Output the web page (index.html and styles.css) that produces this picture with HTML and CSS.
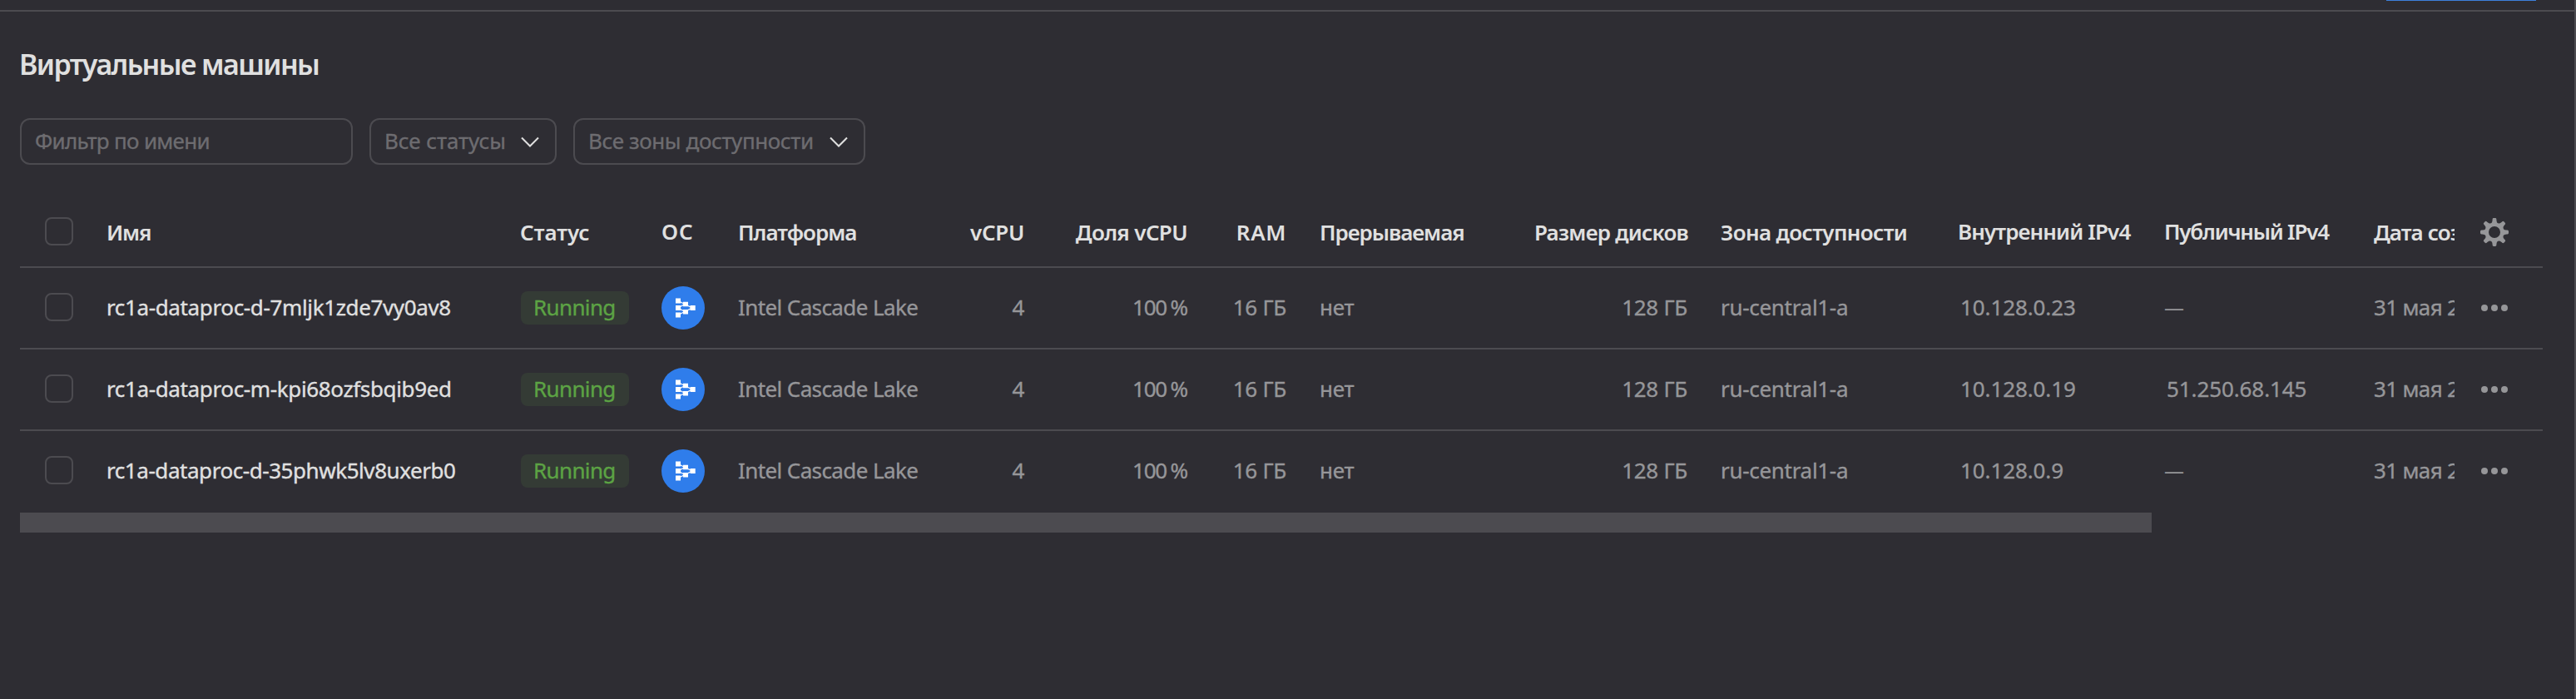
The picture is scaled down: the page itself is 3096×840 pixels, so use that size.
FILE: index.html
```html
<!DOCTYPE html>
<html lang="ru">
<head>
<meta charset="utf-8">
<title>Виртуальные машины</title>
<link rel="stylesheet" href="styles.css">
</head>
<body>
<svg class="defs" width="0" height="0">
  <symbol id="chevron" viewBox="0 0 22 14"><path d="M1 1.500 11 11.500 21 1.500" fill="none" stroke="currentColor" stroke-width="2"/></symbol>
  <symbol id="dataproc" viewBox="0 0 52 52">
    <circle cx="26" cy="26" r="26" fill="#2f7deb"/>
    <path d="M20 17.500 28 21.500 37 26 28 30.500 20 34.500M20 26 28 21.500M20 26 28 30.500" fill="none" stroke="#fff" stroke-width="1.300"/>
    <path d="M17 14.500h6v6h-6zM17 23h6v6h-6zM17 31.500h6v6h-6zM26 18.700h6v5.500h-6zM26 28h6v5.500h-6zM34.500 23h6.200v6h-6.200z" fill="#fff"/>
  </symbol>
  <symbol id="gear" viewBox="-17 -17 34 34">
    <circle r="9.300" fill="none" stroke="currentColor" stroke-width="4.600"/>
    <g fill="currentColor">
      <path id="teeth" d="M-4-10.500Q-2.500-12-2.400-14.500V-15.600Q-2.300-17-1-17H1Q2.300-17 2.400-15.600V-14.500Q2.500-12 4-10.500ZM-4 10.500Q-2.500 12-2.400 14.500V15.600Q-2.300 17-1 17H1Q2.300 17 2.400 15.600V14.500Q2.500 12 4 10.500Z"/>
      <use href="#teeth" transform="rotate(45)"/>
      <use href="#teeth" transform="rotate(90)"/>
      <use href="#teeth" transform="rotate(135)"/>
    </g>
  </symbol>
  <symbol id="dots" viewBox="0 0 32 8"><circle cx="4" cy="4" r="4"/><circle cx="16" cy="4" r="4"/><circle cx="28" cy="4" r="4"/></symbol>
</svg>
<div class="page">
  <header class="toolbar"><div class="toolbar-button"></div></header>
  <main class="content">
    <h1 class="title">Виртуальные машины</h1>
    <div class="filters">
      <div class="field field-name"><span class="hint-name">Фильтр по имени</span></div>
      <div class="field field-status"><span class="hint-status">Все статусы</span><svg class="chevron"><use href="#chevron"/></svg></div>
      <div class="field field-zone"><span class="hint-zone">Все зоны доступности</span><svg class="chevron"><use href="#chevron"/></svg></div>
    </div>
    <div class="table">
      <div class="row head">
        <div class="cell-check"><i class="checkbox"></i></div>
        <div class="cell h-name">Имя</div>
        <div class="cell h-status">Статус</div>
        <div class="cell h-os raised">ОС</div>
        <div class="cell h-platform">Платформа</div>
        <div class="cell num h-vcpu">vCPU</div>
        <div class="cell num h-share">Доля vCPU</div>
        <div class="cell num h-ram">RAM</div>
        <div class="cell h-preempt">Прерываемая</div>
        <div class="cell num h-disk">Размер дисков</div>
        <div class="cell h-zone">Зона доступности</div>
        <div class="cell h-int raised">Внутренний IPv4</div>
        <div class="cell h-pub raised">Публичный IPv4</div>
        <div class="cell date h-date">Дата соз</div>
        <div class="cell-action"><svg class="gear"><use href="#gear"/></svg></div>
      </div>
      <div class="row">
        <div class="cell-check"><i class="checkbox"></i></div>
        <div class="cell name">rc1a-dataproc-d-7mljk1zde7vy0av8</div>
        <div class="cell"><span class="badge">Running</span></div>
        <div class="cell-os"><svg class="os"><use href="#dataproc"/></svg></div>
        <div class="cell platform">Intel Cascade Lake</div>
        <div class="cell num">4</div>
        <div class="cell num share">100 %</div>
        <div class="cell num ram">16 ГБ</div>
        <div class="cell preempt">нет</div>
        <div class="cell num disk">128 ГБ</div>
        <div class="cell zone">ru-central1-a</div>
        <div class="cell ip">10.128.0.23</div>
        <div class="cell empty">—</div>
        <div class="cell date">31 мая 2</div>
        <div class="cell-action"><svg class="dots"><use href="#dots"/></svg></div>
      </div>
      <div class="row">
        <div class="cell-check"><i class="checkbox"></i></div>
        <div class="cell name">rc1a-dataproc-m-kpi68ozfsbqib9ed</div>
        <div class="cell"><span class="badge">Running</span></div>
        <div class="cell-os"><svg class="os"><use href="#dataproc"/></svg></div>
        <div class="cell platform">Intel Cascade Lake</div>
        <div class="cell num">4</div>
        <div class="cell num share">100 %</div>
        <div class="cell num ram">16 ГБ</div>
        <div class="cell preempt">нет</div>
        <div class="cell num disk">128 ГБ</div>
        <div class="cell zone">ru-central1-a</div>
        <div class="cell ip">10.128.0.19</div>
        <div class="cell ip">51.250.68.145</div>
        <div class="cell date">31 мая 2</div>
        <div class="cell-action"><svg class="dots"><use href="#dots"/></svg></div>
      </div>
      <div class="row last">
        <div class="cell-check"><i class="checkbox"></i></div>
        <div class="cell name name-long">rc1a-dataproc-d-35phwk5lv8uxerb0</div>
        <div class="cell"><span class="badge">Running</span></div>
        <div class="cell-os"><svg class="os"><use href="#dataproc"/></svg></div>
        <div class="cell platform">Intel Cascade Lake</div>
        <div class="cell num">4</div>
        <div class="cell num share">100 %</div>
        <div class="cell num ram">16 ГБ</div>
        <div class="cell preempt">нет</div>
        <div class="cell num disk">128 ГБ</div>
        <div class="cell zone">ru-central1-a</div>
        <div class="cell ip">10.128.0.9</div>
        <div class="cell empty">—</div>
        <div class="cell date">31 мая 2</div>
        <div class="cell-action"><svg class="dots"><use href="#dots"/></svg></div>
      </div>
    </div>
    <div class="scrollbar"></div>
  </main>
</div>
</body>
</html>
```
FILE: styles.css
```css
:root {
  --bg: #2e2d33;
  --line: #4c4b50;
  --text: #e0e0e0;
  --muted: #969699;
  --hint: #6d6c70;
}
* { box-sizing: border-box; }
body {
  margin: 0;
  background: var(--bg);
  color: var(--muted);
  font: 400 26px/36px "Noto Sans", sans-serif;
  -webkit-text-stroke: 0.35px currentColor;
}
.defs { display: block; }
.page {
  height: 840px;
  overflow: hidden;
  border-right: 2px solid var(--line);
}
.toolbar {
  height: 14px;
  border-bottom: 2px solid var(--line);
  display: flex;
  justify-content: flex-end;
  padding-right: 46px;
}
.toolbar-button {
  width: 180px;
  height: 1px;
  background: #3d80dc;
}
.content { padding: 40px 38px 0 24px; }
.title {
  margin: 0 0 42px -1px;
  color: var(--text);
  font-size: 34px;
  line-height: 46px;
  font-weight: 600;
  letter-spacing: -1.6px;
  -webkit-text-stroke: 0;
}
.filters {
  display: flex;
  gap: 20px;
  color: var(--hint);
}
.field {
  height: 56px;
  border: 2px solid var(--line);
  border-radius: 12px;
  display: flex;
  align-items: center;
  justify-content: space-between;
  padding: 0 19px 2px 16px;
  white-space: nowrap;
}
.field-name { width: 400px; }
.field-status { width: 225px; }
.field-zone { width: 351px; }
.hint-name { letter-spacing: -0.7px; }
.hint-status { letter-spacing: -0.08px; }
.hint-zone { letter-spacing: -0.4px; }
.chevron {
  width: 22px;
  height: 14px;
  margin-top: 4px;
  color: var(--text);
}
.table { margin-top: 40px; }
.row {
  display: grid;
  grid-template-columns: 84px 497px 170px 92px 279px 105px 196px 119px 258px 224px 285px 248px 252px 117px 106px;
  align-items: center;
  height: 98px;
  width: 3032px;
  border-bottom: 2px solid var(--line);
  letter-spacing: -0.3px;
}
.head {
  height: 84px;
  color: var(--text);
  font-weight: 600;
  -webkit-text-stroke: 0;
}
.last { border-bottom: 0; height: 96px; }
.cell {
  padding: 0 20px 2px 20px;
  white-space: nowrap;
}
.head .cell { padding-bottom: 0; }
.head .raised { padding-bottom: 2px; }
.date {
  padding-right: 0;
  overflow: hidden;
  letter-spacing: -0.5px;
  word-spacing: -0.6px;
}
.num { text-align: right; }
.h-name { letter-spacing: -1.16px; }
.h-status { letter-spacing: -0.04px; }
.h-os { letter-spacing: 0.9px; }
.h-platform { letter-spacing: -0.99px; }
.h-vcpu { letter-spacing: -0.27px; }
.h-share { letter-spacing: -0.63px; }
.h-ram { letter-spacing: 0.6px; }
.h-preempt { letter-spacing: -1.03px; }
.h-disk { letter-spacing: -0.76px; }
.h-zone { letter-spacing: -0.62px; }
.h-int { letter-spacing: -0.88px; }
.h-pub { letter-spacing: -1.22px; }
.h-date { letter-spacing: -0.9px; word-spacing: 0; }
.name { color: var(--text); letter-spacing: -0.36px; }
.name-long { letter-spacing: -0.44px; }
.platform { letter-spacing: -0.6px; }
.share { letter-spacing: -1.2px; word-spacing: -1px; }
.ip { padding-left: 23px; letter-spacing: -0.1px; }
.empty { font-size: 24px; -webkit-text-stroke: 0; }
.cell-check { padding-left: 30px; }
.checkbox {
  display: block;
  width: 34px;
  height: 34px;
  margin-bottom: 2px;
  border: 2px solid var(--line);
  border-radius: 8px;
}
.badge {
  display: block;
  width: 130px;
  height: 40px;
  margin: 0 0 -2px 1px;
  padding: 1px 0 0 15px;
  border-radius: 8px;
  background: #343b35;
  color: #5ca344;
  letter-spacing: -0.64px;
}
.cell-os { padding-left: 20px; }
.os {
  display: block;
  width: 52px;
  height: 52px;
}
.cell-action { padding-left: 31px; }
.gear {
  display: block;
  width: 34px;
  height: 34px;
  color: var(--muted);
}
.dots {
  display: block;
  width: 32px;
  height: 8px;
  margin-left: 1px;
  fill: var(--muted);
}
.scrollbar {
  width: 2562px;
  height: 24px;
  margin-top: 2px;
  background: #4c4b50;
}
```
